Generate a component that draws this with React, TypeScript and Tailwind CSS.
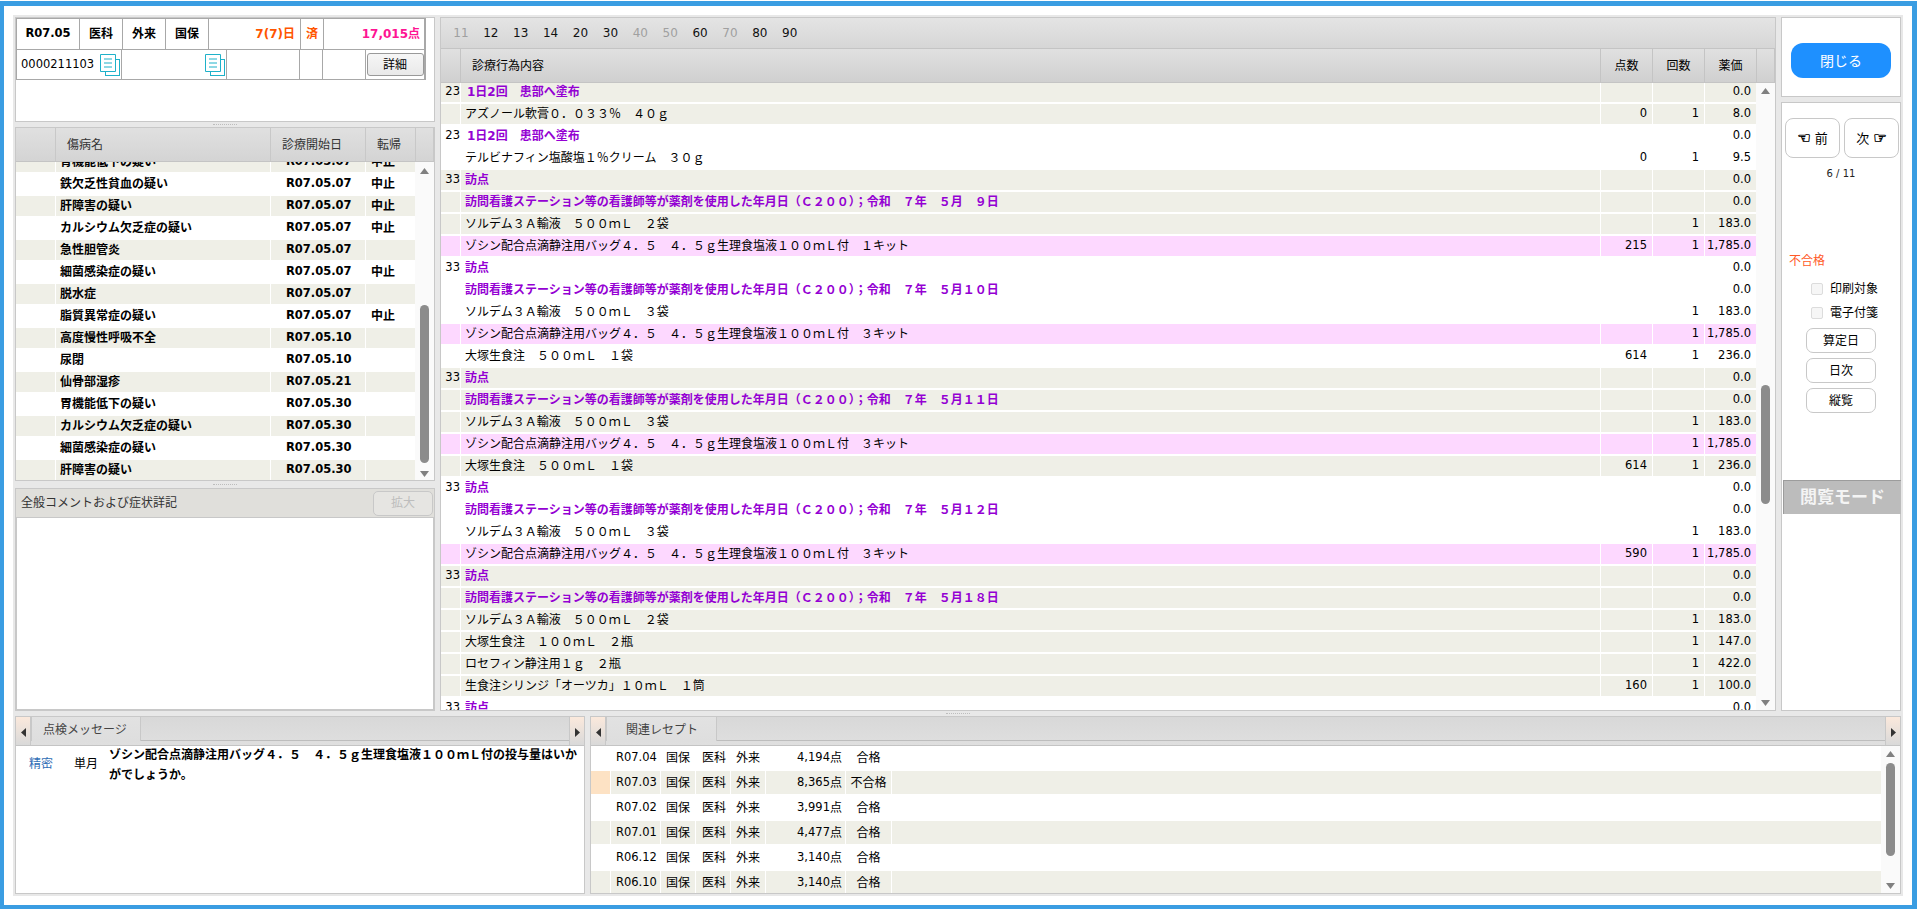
import React from "react";

type Row = { n?: string; t: string; c: "p" | "d" | "x"; a?: string; b?: string; v: string; bg: "w" | "e" | "k" };

const visit = (d: string) => `訪問看護ステーション等の看護師等が薬剤を使用した年月日（Ｃ２００）；令和　７年　５月${d}日`;
const zosyn = (k: string) => `ゾシン配合点滴静注用バッグ４．５　４．５ｇ生理食塩液１００ｍＬ付　${k}キット`;

const rows: Row[] = [
  { n: "23", t: "1日2回　患部へ塗布", c: "d", v: "0.0", bg: "e" },
  { t: "アズノール軟膏０．０３３％　４０ｇ", c: "x", a: "0", b: "1", v: "8.0", bg: "e" },
  { n: "23", t: "1日2回　患部へ塗布", c: "d", v: "0.0", bg: "w" },
  { t: "テルビナフィン塩酸塩１％クリーム　３０ｇ", c: "x", a: "0", b: "1", v: "9.5", bg: "w" },
  { n: "33", t: "訪点", c: "p", v: "0.0", bg: "e" },
  { t: visit("　９"), c: "p", v: "0.0", bg: "e" },
  { t: "ソルデム３Ａ輸液　５００ｍＬ　２袋", c: "x", b: "1", v: "183.0", bg: "e" },
  { t: zosyn("１"), c: "x", a: "215", b: "1", v: "1,785.0", bg: "k" },
  { n: "33", t: "訪点", c: "p", v: "0.0", bg: "w" },
  { t: visit("１０"), c: "p", v: "0.0", bg: "w" },
  { t: "ソルデム３Ａ輸液　５００ｍＬ　３袋", c: "x", b: "1", v: "183.0", bg: "w" },
  { t: zosyn("３"), c: "x", b: "1", v: "1,785.0", bg: "k" },
  { t: "大塚生食注　５００ｍＬ　１袋", c: "x", a: "614", b: "1", v: "236.0", bg: "w" },
  { n: "33", t: "訪点", c: "p", v: "0.0", bg: "e" },
  { t: visit("１１"), c: "p", v: "0.0", bg: "e" },
  { t: "ソルデム３Ａ輸液　５００ｍＬ　３袋", c: "x", b: "1", v: "183.0", bg: "e" },
  { t: zosyn("３"), c: "x", b: "1", v: "1,785.0", bg: "k" },
  { t: "大塚生食注　５００ｍＬ　１袋", c: "x", a: "614", b: "1", v: "236.0", bg: "e" },
  { n: "33", t: "訪点", c: "p", v: "0.0", bg: "w" },
  { t: visit("１２"), c: "p", v: "0.0", bg: "w" },
  { t: "ソルデム３Ａ輸液　５００ｍＬ　３袋", c: "x", b: "1", v: "183.0", bg: "w" },
  { t: zosyn("３"), c: "x", a: "590", b: "1", v: "1,785.0", bg: "k" },
  { n: "33", t: "訪点", c: "p", v: "0.0", bg: "e" },
  { t: visit("１８"), c: "p", v: "0.0", bg: "e" },
  { t: "ソルデム３Ａ輸液　５００ｍＬ　２袋", c: "x", b: "1", v: "183.0", bg: "e" },
  { t: "大塚生食注　１００ｍＬ　２瓶", c: "x", b: "1", v: "147.0", bg: "e" },
  { t: "ロセフィン静注用１ｇ　２瓶", c: "x", b: "1", v: "422.0", bg: "e" },
  { t: "生食注シリンジ「オーツカ」１０ｍＬ　１筒", c: "x", a: "160", b: "1", v: "100.0", bg: "e" },
  { n: "33", t: "訪点", c: "p", v: "0.0", bg: "w" },
];

const diseases: [string, string, string][] = [
  ["胃機能低下の疑い", "R07.05.07", "中止"],
  ["鉄欠乏性貧血の疑い", "R07.05.07", "中止"],
  ["肝障害の疑い", "R07.05.07", "中止"],
  ["カルシウム欠乏症の疑い", "R07.05.07", "中止"],
  ["急性胆管炎", "R07.05.07", ""],
  ["細菌感染症の疑い", "R07.05.07", "中止"],
  ["脱水症", "R07.05.07", ""],
  ["脂質異常症の疑い", "R07.05.07", "中止"],
  ["高度慢性呼吸不全", "R07.05.10", ""],
  ["尿閉", "R07.05.10", ""],
  ["仙骨部湿疹", "R07.05.21", ""],
  ["胃機能低下の疑い", "R07.05.30", ""],
  ["カルシウム欠乏症の疑い", "R07.05.30", ""],
  ["細菌感染症の疑い", "R07.05.30", ""],
  ["肝障害の疑い", "R07.05.30", ""],
];

const related: [string, string, string][] = [
  ["R07.04", "4,194点", "合格"],
  ["R07.03", "8,365点", "不合格"],
  ["R07.02", "3,991点", "合格"],
  ["R07.01", "4,477点", "合格"],
  ["R06.12", "3,140点", "合格"],
  ["R06.10", "3,140点", "合格"],
];

function Tri({ dir, dark }: { dir: "up" | "down" | "left" | "right"; dark?: boolean }) {
  const pts = { up: "4.5,0 9,6 0,6", down: "0,0 9,0 4.5,6", left: "5,0 5,9 0,4.5", right: "0,0 5,4.5 0,9" }[dir];
  const hor = dir === "up" || dir === "down";
  return (
    <svg width={hor ? 9 : 5} height={hor ? 6 : 9} viewBox={hor ? "0 0 9 6" : "0 0 5 9"} className="block shrink-0">
      <polygon points={pts} fill={dark ? "#333333" : "#808080"} />
    </svg>
  );
}

function DocIcon() {
  return (
    <svg width="20" height="22" viewBox="0 0 20 22" className="block shrink-0" fill="white" stroke="#1eb1c9" strokeWidth="1">
      <rect x="5.5" y="5.5" width="14" height="16" />
      <path d="M0.5 0.5H15.5V17.5H0.5Z" />
      <path d="M4 5H12M4 9H12M4 13H12" />
    </svg>
  );
}

function Splitter({ h }: { h: string }) {
  return (
    <div className={`${h} flex items-center justify-center`}>
      <div className="w-[24px] border-t border-dotted border-[#bdbdbd]" />
    </div>
  );
}

function TabBar({ title, tabW, textL, leftW }: { title: string; tabW: string; textL: string; leftW: string }) {
  return (
    <div className="flex h-[29px] shrink-0 border-b border-[#c4c4c4] bg-[#d8d8d8]">
      <div className={`${leftW} flex items-center justify-center border-r border-[#c8c8c8] bg-gradient-to-b from-[#fbe9dc] to-[#d9d9d9] pt-[3px]`}>
        <Tri dir="left" dark />
      </div>
      <div className="flex min-w-0 flex-1 flex-col bg-gradient-to-b from-[#d8d8d8] to-[#dfdfdf]">
        <div className="flex h-[24px] border-b border-[#bdbdbd]">
          <div className={`${tabW} ${textL} mb-[-1px] flex items-center border-x border-[#c8c8c8] border-b-0 bg-gradient-to-b from-[#e2e2e2] to-[#dedede] pt-[1px] text-[#444]`}>{title}</div>
        </div>
      </div>
      <div className="flex w-[15px] items-center justify-center border-l border-[#c8c8c8] bg-gradient-to-b from-[#fbe9dc] to-[#d9d9d9] pt-[3px]">
        <Tri dir="right" dark />
      </div>
    </div>
  );
}

function Btn({ label, mt }: { label: string; mt: string }) {
  return (
    <div className={`${mt} flex h-[25px] w-[70px] items-center justify-center self-center rounded-[7px] border border-[#c8c8c8] bg-white`}>{label}</div>
  );
}

function Check({ label, mt }: { label: string; mt: string }) {
  return (
    <div className={`${mt} ml-[29px] flex h-[14px] items-center`}>
      <div className="h-[12px] w-[12px] rounded-[2px] border border-[#dcdcdc] bg-[#f6f6f6]" />
      <span className="ml-[7px]">{label}</span>
    </div>
  );
}

export default function App() {
  return (
    <div lang="ja" className="h-[909px] w-[1917px] overflow-hidden bg-white pt-px font-['DejaVu_Sans','Noto_Sans_CJK_JP',sans-serif] text-[12px] leading-none text-black">
      <div className="h-[908px] border-t-[5px] border-r-[5px] border-b-[4px] border-l-[4px] border-[#3a9de2] bg-white p-[9px]">
        <div className="h-[881px] bg-[#e8e8e8] p-[2px]">
          {/* upper area */}
          <div className="flex h-[694px] gap-[5px]">
            {/* left column */}
            <div className="flex w-[420px] flex-col">
              <div className="h-[105px] border border-[#c8c8c8] bg-white">
                <div className="w-[410px] border-x border-b border-[#a8a8a8] [&>div]:flex">
                  <div className="h-[32px] border-b border-t border-[#a8a8a8] font-bold [&>div]:flex [&>div]:items-center [&>div]:border-r [&>div]:border-[#a8a8a8]">
                    <div className="w-[63px] justify-center text-[11.5px]">R07.05</div>
                    <div className="w-[43px] justify-center">医科</div>
                    <div className="w-[43px] justify-center">外来</div>
                    <div className="w-[43px] justify-center">国保</div>
                    <div className="w-[92px] justify-end pr-[5px] text-[#ff5500]">7(7)日</div>
                    <div className="w-[23px] justify-center text-[#ff5500]">済</div>
                    <div className="flex-1 justify-end border-r-0 pr-[4px] text-[#ff1493]">17,015点</div>
                  </div>
                  <div className="h-[29px] [&>div]:flex [&>div]:items-center [&>div]:border-r [&>div]:border-[#a8a8a8]">
                    <div className="w-[105px] pl-[4px]">
                      <span className="w-[79px] text-[11.5px]">0000211103</span>
                      <DocIcon />
                    </div>
                    <div className="w-[105px] justify-end pr-[1px]"><DocIcon /></div>
                    <div className="w-[73px]" />
                    <div className="w-[23px]" />
                    <div className="w-[43px]" />
                    <div className="flex-1 justify-center border-r-0">
                      <div className="flex h-[23px] w-[57px] items-center justify-center rounded-[3px] border border-[#999] bg-gradient-to-b from-[#f6f6f6] to-[#e9e9e9]">詳細</div>
                    </div>
                  </div>
                </div>
              </div>
              <Splitter h="h-[5px]" />
              <div className="flex h-[354px] flex-col overflow-hidden border border-[#c8c8c8] bg-white">
                <div className="flex h-[34px] shrink-0 border-b border-[#c4c4c4] bg-gradient-to-b from-[#e0e0e0] to-[#d4d4d4] text-[#333] [&>div]:flex [&>div]:items-center [&>div]:border-r [&>div]:border-[#c8c8c8]">
                  <div className="w-[40px]" />
                  <div className="w-[215px] pl-[11px]">傷病名</div>
                  <div className="w-[95px] pl-[11px]">診療開始日</div>
                  <div className="w-[50px] pl-[11px]">転帰</div>
                  <div className="flex-1 border-r-0" />
                </div>
                <div className="flex min-h-0 flex-1">
                  <div className="w-[399px] overflow-hidden">
                    <div className="mt-[-10px] font-bold">
                      {diseases.map((d, i) => (
                        <div key={i} className={`mb-[2px] flex h-[20px] gap-px ${i % 2 === 0 ? "bg-white [&>div]:bg-[#efefe7]" : "bg-white [&>div]:bg-white"} [&>div]:flex [&>div]:items-center`}>
                          <div className="w-[39px]" />
                          <div className="w-[214px] pl-[4px]">{d[0]}</div>
                          <div className="w-[94px] pl-[15px] text-[11.5px]">{d[1]}</div>
                          <div className="w-[49px] pl-[5px]">{d[2]}</div>
                        </div>
                      ))}
                    </div>
                  </div>
                  <div className="flex w-[19px] flex-col items-center bg-[#fafafa] pt-[6px] pb-[3px]">
                    <Tri dir="up" />
                    <div className="mt-[131px] h-[158px] w-[9px] rounded-[5px] bg-[#8c8c8c]" />
                    <div className="mt-auto"><Tri dir="down" /></div>
                  </div>
                </div>
              </div>
              <Splitter h="h-[7px]" />
              <div className="flex h-[223px] flex-col border border-[#c8c8c8] bg-white">
                <div className="flex h-[28px] shrink-0 items-center justify-between bg-[#e0dfdb] pr-px pl-[5px] text-[#333]">
                  <span>全般コメントおよび症状詳記</span>
                  <div className="flex h-[25px] w-[60px] items-center justify-center rounded-[5px] border border-[#c8c8c8] bg-[#e6e5e2] text-[#bdbdbd]">拡大</div>
                </div>
                <div className="flex-1 border border-[#c8c8c8] bg-white" />
              </div>
            </div>

            {/* centre */}
            <div className="flex w-[1336px] flex-col overflow-hidden border border-[#c8c8c8] bg-white">
              <div className="flex h-[31px] shrink-0 items-center border-b border-[#c4c4c4] bg-gradient-to-b from-[#e4e4e4] to-[#d6d6d6] pl-[5px]">
                {["11", "12", "13", "14", "20", "30", "40", "50", "60", "70", "80", "90"].map((c) => (
                  <span key={c} className={`w-[29.9px] text-center ${["11", "40", "50", "70"].includes(c) ? "text-[#a0a0a0]" : "text-[#111]"}`}>{c}</span>
                ))}
              </div>
              <div className="flex h-[34px] shrink-0 border-b border-[#c4c4c4] bg-gradient-to-b from-[#e0e0e0] to-[#d0d0d0] [&>div]:flex [&>div]:items-center [&>div]:border-r [&>div]:border-[#c4c4c4]">
                <div className="w-[20px]" />
                <div className="w-[1140px] pl-[11px]">診療行為内容</div>
                <div className="w-[52px] justify-center">点数</div>
                <div className="w-[52px] justify-center">回数</div>
                <div className="w-[52px] justify-center">薬価</div>
                <div className="flex-1 border-r-0" />
              </div>
              <div className="flex min-h-0 flex-1">
                <div className="w-[1315px] overflow-hidden">
                  <div className="mt-[-1px]">
                    {rows.map((r, i) => (
                      <div key={i} className={`mb-[2px] flex h-[20px] gap-px [&>div]:flex [&>div]:items-center ${r.bg === "e" ? "[&>div]:bg-[#efefe7]" : r.bg === "k" ? "[&>div]:bg-[#fdd8ff]" : "[&>div]:bg-white"}`}>
                        <div className="w-[19px] justify-end text-[11.5px]">{r.n}</div>
                        <div className={`w-[1139px] ${r.c === "d" ? "pl-[6px]" : "pl-[4px]"} ${r.c === "x" ? "" : "font-bold text-[#9400d3]"}`}>{r.t}</div>
                        <div className="w-[51px] justify-end pr-[5px] text-[11.5px]">{r.a}</div>
                        <div className="w-[51px] justify-end pr-[5px] text-[11.5px]">{r.b}</div>
                        <div className="w-[51px] justify-end pr-[5px] text-[11.5px]">{r.v}</div>
                      </div>
                    ))}
                  </div>
                </div>
                <div className="flex w-[19px] flex-col items-center bg-[#fafafa] pt-[5px] pb-[4px]">
                  <Tri dir="up" />
                  <div className="mt-[291px] h-[119px] w-[9px] rounded-[5px] bg-[#8c8c8c]" />
                  <div className="mt-auto"><Tri dir="down" /></div>
                </div>
              </div>
            </div>

            {/* right column */}
            <div className="flex w-[120px] flex-col gap-[5px]">
              <div className="flex h-[80px] items-start justify-center border border-[#c8c8c8] bg-white pt-[25px]">
                <div className="flex h-[35px] w-[100px] items-center justify-center rounded-[12px] bg-[#1e90ff] text-[14px] text-white">閉じる</div>
              </div>
              <div className="flex flex-1 flex-col border border-[#c8c8c8] bg-white">
                <div className="mt-[15px] ml-[3px] flex gap-[4px] text-[13px]">
                  <div className="flex h-[40px] w-[55px] items-center justify-center gap-[4px] rounded-[8px] border border-[#c8c8c8]"><span className="text-[15px] [-webkit-text-stroke:0.5px_black]">☜</span><span>前</span></div>
                  <div className="flex h-[40px] w-[55px] items-center justify-center gap-[4px] rounded-[8px] border border-[#c8c8c8]"><span>次</span><span className="text-[15px] [-webkit-text-stroke:0.5px_black]">☞</span></div>
                </div>
                <div className="mt-[11px] text-center text-[10px] text-[#222]">6 / 11</div>
                <div className="mt-[76px] ml-[7px] text-[#ff5a28]">不合格</div>
                <Check label="印刷対象" mt="mt-[15px]" />
                <Check label="電子付箋" mt="mt-[10px]" />
                <Btn label="算定日" mt="mt-[8px]" />
                <Btn label="日次" mt="mt-[5px]" />
                <Btn label="縦覧" mt="mt-[5px]" />
                <div className="mt-[67px] ml-px flex h-[34px] w-[118px] items-center justify-center border-t border-l border-[#9c9c9c] bg-[#bcbcbc] text-[17px] font-bold text-[#f4f4f4]">閲覧モード</div>
              </div>
            </div>
          </div>

          <Splitter h="h-[5px]" />

          {/* lower area */}
          <div className="flex h-[178px] gap-[5px]">
            <div className="flex w-[570px] flex-col border border-[#c8c8c8] bg-white">
              <TabBar title="点検メッセージ" tabW="w-[110px]" textL="pl-[11px]" leftW="w-[15px]" />
              <div className="flex">
                <span className="ml-[13px] mt-[12px] w-[45px] text-[#2f6db5]">精密</span>
                <span className="mt-[12px] w-[35px]">単月</span>
                <p className="mt-[-1px] w-[475px] font-bold leading-[20px]">ゾシン配合点滴静注用バッグ４．５　４．５ｇ生理食塩液１００ｍＬ付の投与量はいかがでしょうか。</p>
              </div>
            </div>
            <div className="flex w-[1311px] flex-col border border-[#c8c8c8] bg-white">
              <TabBar title="関連レセプト" tabW="w-[111px]" textL="pl-[19px]" leftW="w-[15px]" />
              <div className="flex min-h-0 flex-1">
                <div className="w-[1290px] overflow-hidden">
                  {related.map((r, i) => (
                    <div key={r[0]} className={`mb-[2px] flex h-[23px] gap-px [&>div]:flex [&>div]:items-center ${i % 2 === 1 ? "[&>div]:bg-[#efefe7]" : "[&>div]:bg-white"}`}>
                      <div className={`w-[19px] ${i === 1 ? "!bg-[#fde2c4]" : ""}`} />
                      <div className="w-[49px] pl-[5px] text-[11.5px]">{r[0]}</div>
                      <div className="w-[34px] pl-[5px]">国保</div>
                      <div className="w-[34px] pl-[6px]">医科</div>
                      <div className="w-[34px] pl-[5px]">外来</div>
                      <div className="w-[79px] justify-end pr-[3px]"><span className="text-[11.5px]">{r[1].slice(0, -1)}</span>点</div>
                      <div className="w-[45px] justify-center">{r[2]}</div>
                      <div className="flex-1" />
                    </div>
                  ))}
                </div>
                <div className="flex w-[19px] flex-col items-center bg-[#fafafa] pt-[5px] pb-[4px]">
                  <Tri dir="up" />
                  <div className="mt-[6px] h-[93px] w-[9px] rounded-[5px] bg-[#8c8c8c]" />
                  <div className="mt-auto"><Tri dir="down" /></div>
                </div>
              </div>
            </div>
          </div>
        </div>
      </div>
    </div>
  );
}
